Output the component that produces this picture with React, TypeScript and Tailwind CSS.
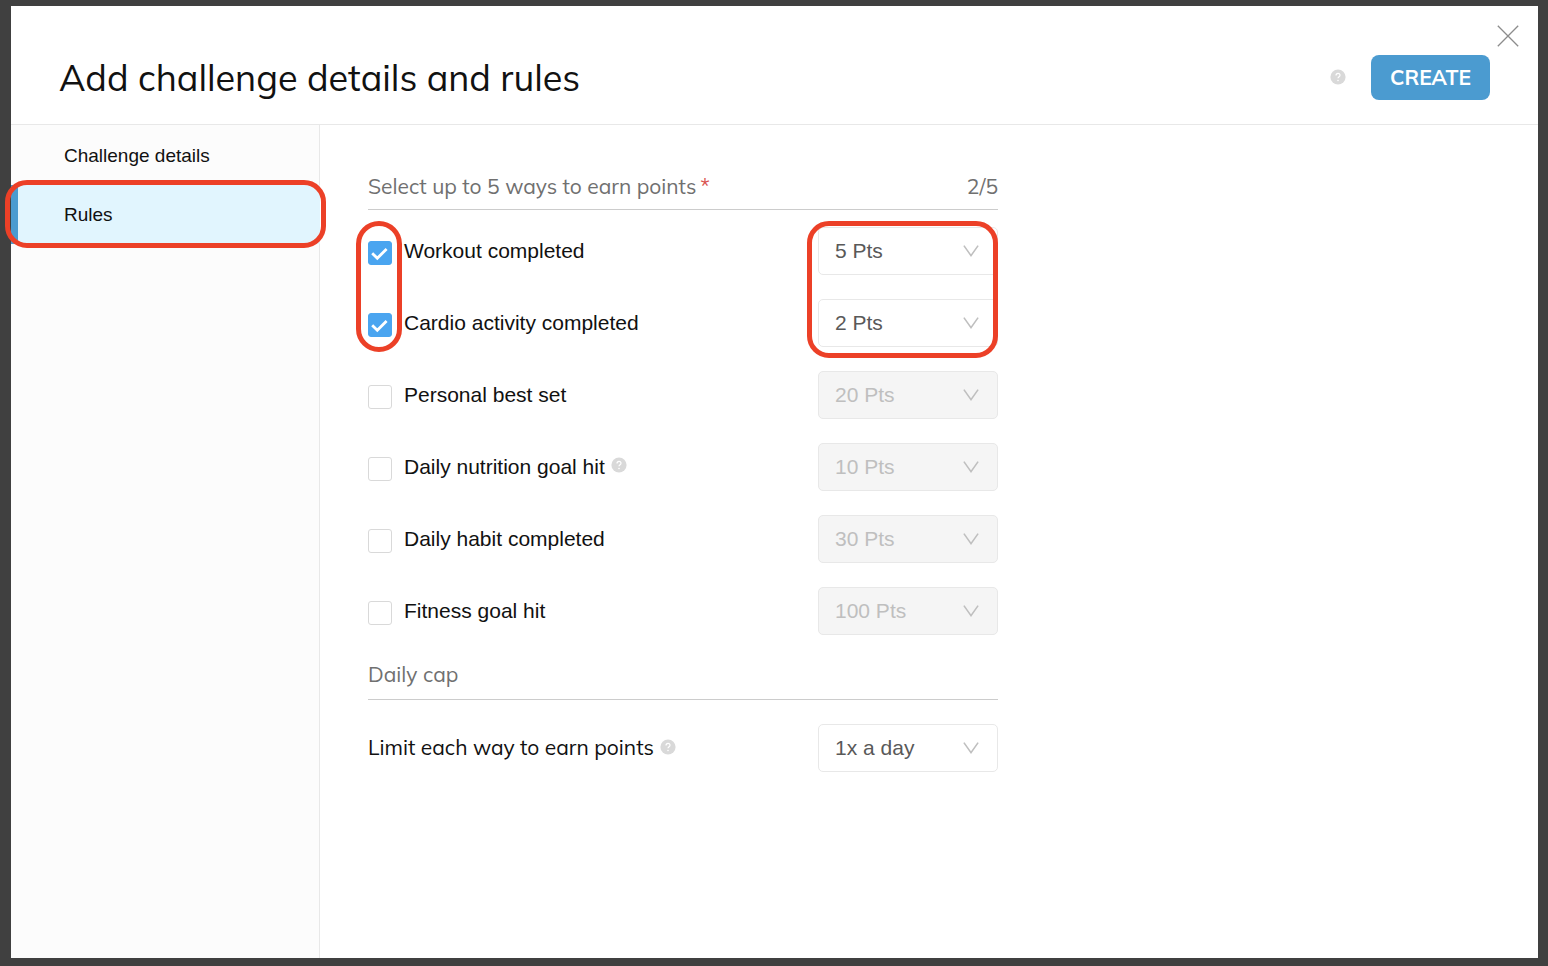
import { useState } from "react";

type Way = {
  id: string;
  label: string;
  points: string;
  help?: boolean;
};

const ways: Way[] = [
  { id: "workout", label: "Workout completed", points: "5 Pts" },
  { id: "cardio", label: "Cardio activity completed", points: "2 Pts" },
  { id: "best", label: "Personal best set", points: "20 Pts" },
  { id: "nutrition", label: "Daily nutrition goal hit", points: "10 Pts", help: true },
  { id: "habit", label: "Daily habit completed", points: "30 Pts" },
  { id: "fitness", label: "Fitness goal hit", points: "100 Pts" },
];

function HelpIcon() {
  return (
    <svg viewBox="0 0 16 16" className="size-4 shrink-0" aria-hidden="true">
      <circle cx="8" cy="8" r="7.6" fill="#d9d9d9" />
      <path
        d="M6 6.5C6 5.2 6.8 4.4 8 4.4s2 .8 2 1.9c0 1.3-2 1.5-2 3"
        fill="none"
        stroke="#fff"
        strokeWidth="1.2"
      />
      <circle cx="8" cy="11.5" r="0.8" fill="#fff" />
    </svg>
  );
}

function Dropdown({ id, label, value, disabled }: { id: string; label: string; value: string; disabled?: boolean }) {
  return (
    <div className="relative w-[180px] shrink-0">
      <select
        id={id}
        aria-label={label}
        disabled={disabled}
        defaultValue={value}
        className="block h-12 w-full appearance-none rounded-[5px] border border-[#e8e8e8] bg-white pr-10 pl-4 text-[21px] text-[#595959] disabled:bg-[#f5f5f5] disabled:text-[#bfbfbf] disabled:opacity-100"
      >
        <option>{value}</option>
      </select>
      <svg
        viewBox="0 0 16 12"
        className="pointer-events-none absolute top-[18px] right-[19px] h-3 w-4"
        fill="none"
        stroke="#bfbfbf"
        strokeWidth="1.6"
        aria-hidden="true"
      >
        <path d="M0.9 0.6 8 10.6 15.1 0.6" />
      </svg>
    </div>
  );
}

function WayRow({ way, checked, onToggle }: { way: Way; checked: boolean; onToggle: () => void }) {
  return (
    <div className="flex h-12 items-center justify-between">
      <div className="flex items-center">
        <span className="mt-1 mr-3 grid size-6 shrink-0">
          <input
            id={way.id}
            type="checkbox"
            checked={checked}
            onChange={onToggle}
            className="col-start-1 row-start-1 size-6 appearance-none rounded-[3px] border border-[#d9d9d9] bg-white checked:border-[#4aa5f0] checked:bg-[#4aa5f0]"
          />
          {checked && (
            <svg
              viewBox="0 0 24 24"
              className="pointer-events-none col-start-1 row-start-1 size-6"
              fill="none"
              stroke="#fff"
              strokeWidth="2.8"
              aria-hidden="true"
            >
              <path d="M4.2 12.2 9.3 17.2 18.6 8" />
            </svg>
          )}
        </span>
        <label htmlFor={way.id} className="text-[21px] leading-6 text-[#111]">
          {way.label}
        </label>
        {way.help && (
          <span className="mb-1 ml-1.5">
            <HelpIcon />
          </span>
        )}
      </div>
      <Dropdown id={way.id + "-points"} label={way.label + " points"} value={way.points} disabled={!checked} />
    </div>
  );
}

export default function App() {
  const [selected, setSelected] = useState<string[]>(["workout", "cardio"]);
  const toggle = (id: string) =>
    setSelected((s) => (s.includes(id) ? s.filter((x) => x !== id) : s.length < 5 ? [...s, id] : s));
  const row = (way: Way) => (
    <WayRow key={way.id} way={way} checked={selected.includes(way.id)} onToggle={() => toggle(way.id)} />
  );

  return (
    <div className="flex min-h-screen bg-[#404040] pt-1.5 pr-2.5 pb-2 pl-[11px] font-['Liberation_Sans',Arial,sans-serif]">
      <div role="dialog" aria-labelledby="title" className="relative flex grow flex-col bg-white">
        <button type="button" aria-label="Close" className="absolute top-[19px] right-[19px]">
          <svg viewBox="0 0 22 22" className="size-[22px]" stroke="#8c8c8c" strokeWidth="1.3" aria-hidden="true">
            <path d="M0.8 0.8 21.2 21.2M21.2 0.8 0.8 21.2" />
          </svg>
        </button>
        <header className="flex h-[119px] items-center justify-between border-b border-[#e8e8e8] pt-[25px] pr-12 pl-12 font-['Mulish','Lato',sans-serif]">
          <h1 id="title" className="text-[36px] leading-[48px] text-[#111]">
            Add challenge details and rules
          </h1>
          <div className="flex items-center gap-[25px]">
            <span className="pb-0.5">
              <HelpIcon />
            </span>
            <button
              type="button"
              className="h-[45px] w-[119px] rounded-lg bg-[#4b9bd0] text-[21px] font-bold text-white"
            >
              CREATE
            </button>
          </div>
        </header>
        <div className="flex grow">
          <nav className="w-[309px] shrink-0 border-r border-[#e8e8e8] bg-[#fcfcfc] pt-px text-[19px] text-[#111]">
            <a href="#details" className="flex h-[59px] items-center pt-0.5 pl-[53px]">
              Challenge details
            </a>
            <a
              href="#rules"
              aria-current="page"
              className="relative -mr-px flex h-[59px] items-center border-l-[7px] border-[#4b9bd0] bg-[#e1f5fe] pt-0.5 pl-[46px]"
            >
              Rules
              <span className="pointer-events-none absolute -top-[5px] -right-1.5 -bottom-1 -left-[13px] rounded-[22px] border-5 border-[#ec4027]" />
            </a>
          </nav>
          <main className="grow pt-[39px] pr-12 pl-12">
            <div className="max-w-[630px]">
              <div className="flex h-[46px] items-center justify-between border-b border-[#ccc] font-['Mulish','Lato',sans-serif] text-[21px] text-[#707070]">
                <h2>
                  Select up to 5 ways to earn points<span className="ml-1 text-[#d9534f]">*</span>
                </h2>
                <span>{selected.length}/5</span>
              </div>
              <div className="mt-[17px] flex flex-col gap-6">
                <div className="relative flex flex-col gap-6">
                  {ways.slice(0, 2).map(row)}
                  <span className="pointer-events-none absolute -top-1.5 -bottom-[5px] -left-3 w-[46px] rounded-full border-5 border-[#ec4027]" />
                  <span className="pointer-events-none absolute -top-1.5 right-0 -bottom-[11px] w-[191px] rounded-[22px] border-5 border-[#ec4027]" />
                </div>
                {ways.slice(2).map(row)}
              </div>
              <h2 className="mt-4 flex h-[49px] items-center border-b border-[#ccc] font-['Mulish','Lato',sans-serif] text-[21px] text-[#707070]">
                Daily cap
              </h2>
              <div className="mt-6 flex h-12 items-center justify-between">
                <div className="flex items-center">
                  <label htmlFor="limit" className="font-['Mulish','Lato',sans-serif] text-[21px] text-[#111]">
                    Limit each way to earn points
                  </label>
                  <span className="mb-0.5 ml-1.5">
                    <HelpIcon />
                  </span>
                </div>
                <Dropdown id="limit" label="Limit each way to earn points" value="1x a day" />
              </div>
            </div>
          </main>
        </div>
      </div>
    </div>
  );
}
